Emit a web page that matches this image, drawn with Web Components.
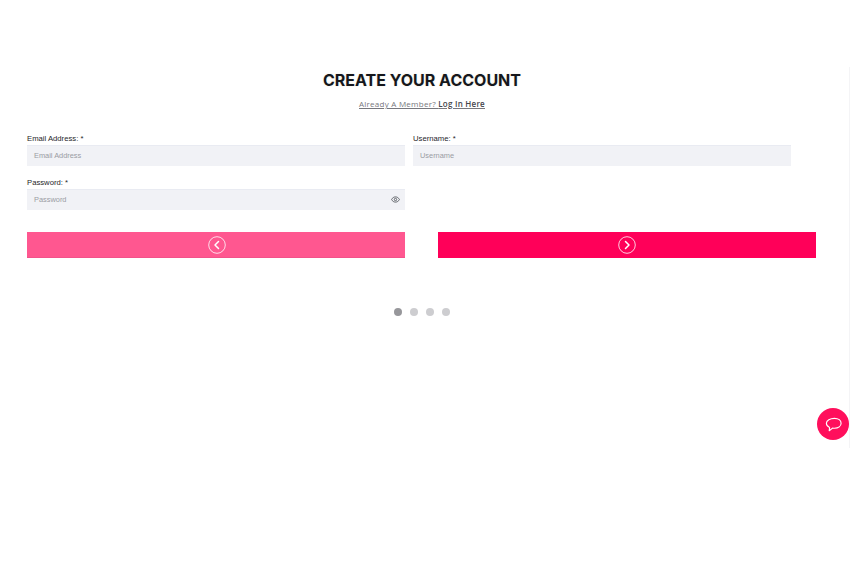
<!DOCTYPE html>
<html>
<head>
<meta charset="utf-8">
<title>Create your account</title>
<style>
  html, body { margin: 0; background: #fff; height: 100%; overflow: hidden; }
  body { font-family: "Liberation Sans", Arial, sans-serif; }
</style>
</head>
<body>
<signup-page>
  <signup-head title="CREATE YOUR ACCOUNT"></signup-head>
  <signup-form>
    <form-field label="Email Address:" placeholder="Email Address"></form-field>
    <form-field label="Username:" placeholder="Username"></form-field>
    <form-field label="Password:" placeholder="Password" eye></form-field>
  </signup-form>
  <step-nav></step-nav>
  <step-dots count="4" active="0"></step-dots>
</signup-page>
<chat-bubble></chat-bubble>

<script>
class signupPage extends HTMLElement {
    constructor() {
        super();
        this.attachShadow({ mode: "open" });
        this.shadowRoot.innerHTML = `
        <style>
            :host {
                display: block;
                position: relative;
                box-sizing: border-box;
                height: 562px;
                padding: 71px 0 0 27px;
            }
            /* faint rail on the right edge */
            .rail {
                position: absolute;
                right: 0;
                top: 67px;
                width: 1px;
                height: 381px;
                background: #f4f4f6;
            }
        </style>
        <slot></slot>
        <div class="rail"></div>
        `;
    }
}

class signupHead extends HTMLElement {
    constructor() {
        super();
        this.attachShadow({ mode: "open" });
        this.shadowRoot.innerHTML = `
        <style>
            :host {
                display: flex;
                flex-direction: column;
                align-items: center;
                width: 790px;
            }
            h1 {
                margin: 0;
                font: 700 16px/18px Inter, sans-serif;
                color: #15171c;
                letter-spacing: 0;
                text-shadow: 0 0 2px #e9e6d8;
            }
            p {
                margin: 9px 0 0;
                font: 400 8px/11px "Open Sans", sans-serif;
                letter-spacing: 0.25px;
                color: #77777d;
                text-decoration: underline;
            }
            b { font-weight: 600; color: #45454b; }
        </style>
        <h1>${this.getAttribute("title")}</h1>
        <p>Already A Member? <b>Log In Here</b></p>
        `;
    }
}

class signupForm extends HTMLElement {
    constructor() {
        super();
        this.attachShadow({ mode: "open" });
        this.shadowRoot.innerHTML = `
        <style>
            :host {
                display: grid;
                grid-template-columns: 378px 378px;
                column-gap: 8px;
                row-gap: 12px;
                margin-top: 25px;
            }
        </style>
        <slot></slot>
        `;
    }
}

class formField extends HTMLElement {
    constructor() {
        super();
        this.attachShadow({ mode: "open" });
        const eye = this.hasAttribute("eye")
            ? `<svg viewBox="0 0 24 24" width="9" height="9" fill="none" stroke="#5f6368" stroke-width="2.600">
                 <path d="M1.500 12C4 7.500 7.600 5 12 5s8 2.500 10.500 7C20 16.500 16.400 19 12 19s-8-2.500-10.500-7z"/>
                 <circle cx="12" cy="12" r="3.200"/>
               </svg>`
            : "";
        this.shadowRoot.innerHTML = `
        <style>
            :host { display: block; }
            label {
                display: block;
                font-size: 7.700px;
                line-height: 10px;
                height: 11px;
                color: #26262a;
            }
            .box {
                display: flex;
                align-items: center;
                justify-content: space-between;
                box-sizing: border-box;
                height: 21px;
                padding: 0 5px 2px 7px;
                background: #f1f2f6;
                border-top: 1px solid #e9ebf2;
                font-size: 7.400px;
                color: #9a9ca3;
            }
            svg { display: block; }
        </style>
        <label>${this.getAttribute("label")} *</label>
        <div class="box"><span>${this.getAttribute("placeholder")}</span>${eye}</div>
        `;
    }
}

class stepNav extends HTMLElement {
    constructor() {
        super();
        this.attachShadow({ mode: "open" });
        const arrow = (d) => `
            <svg viewBox="0 0 18 18" width="18" height="18" fill="none" stroke="#fff">
                <circle cx="9" cy="9" r="8.300" stroke-width="0.800"/>
                <path d="${d}" stroke-width="1.500" stroke-linecap="round" stroke-linejoin="round"/>
            </svg>`;
        this.shadowRoot.innerHTML = `
        <style>
            :host {
                display: grid;
                grid-template-columns: 378px 378px;
                column-gap: 33px;
                margin-top: 22px;
            }
            div {
                display: flex;
                align-items: center;
                justify-content: center;
                height: 26px;
            }
            .prev { background: #ff5790; border-bottom: 1px solid #f2528a; box-sizing: border-box; padding-left: 1px; }
            .next { background: #ff0059; }
        </style>
        <div class="prev">${arrow("M10.500 5.500 7 9l3.500 3.500")}</div>
        <div class="next">${arrow("M7.500 5.500 11 9l-3.500 3.500")}</div>
        `;
    }
}

class stepDots extends HTMLElement {
    constructor() {
        super();
        this.attachShadow({ mode: "open" });
        const count = Number(this.getAttribute("count"));
        const active = Number(this.getAttribute("active"));
        let dots = "";
        for (let i = 0; i < count; i++) {
            dots += `<i class="${i === active ? "on" : ""}"></i>`;
        }
        this.shadowRoot.innerHTML = `
        <style>
            :host {
                display: flex;
                justify-content: center;
                gap: 8px;
                width: 790px;
                margin-top: 50px;
            }
            i {
                display: block;
                width: 8px;
                height: 8px;
                border-radius: 50%;
                background: #cdcdd0;
            }
            i.on { background: #97979b; }
        </style>
        ${dots}
        `;
    }
}

class chatBubble extends HTMLElement {
    constructor() {
        super();
        this.attachShadow({ mode: "open" });
        this.shadowRoot.innerHTML = `
        <style>
            :host {
                position: fixed;
                left: 817px;
                top: 408px;
                width: 32px;
                height: 32px;
                display: flex;
                align-items: center;
                justify-content: center;
                border-radius: 50%;
                background: #ff0f5c;
            }
        </style>
        <svg viewBox="0 0 20 20" width="19" height="19" fill="none" stroke="#fff" stroke-width="1.200" stroke-linejoin="round">
            <path d="M11 3.500c4.200 0 7 2.300 7 5.300 0 3-2.900 5.200-7 5.200-.7 0-1.400-.1-2-.2L5.500 16.500l.4-3.400C3.700 12.200 2.500 10.700 2.500 8.800c0-3 4-5.300 8.500-5.300z"/>
        </svg>
        `;
    }
}

customElements.define("signup-page", signupPage);
customElements.define("signup-head", signupHead);
customElements.define("signup-form", signupForm);
customElements.define("form-field", formField);
customElements.define("step-nav", stepNav);
customElements.define("step-dots", stepDots);
customElements.define("chat-bubble", chatBubble);
</script>
</body>
</html>
